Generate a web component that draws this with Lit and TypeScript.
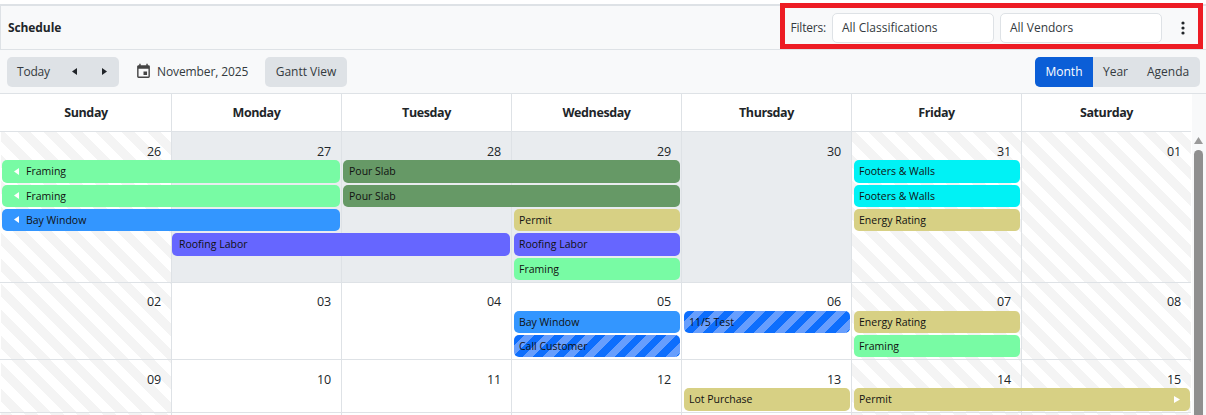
import { LitElement, html, css } from "lit";
import { customElement } from "lit/decorators.js";

type Ev = { t: string; r: number; a: number; b: number; c: string; ml?: string; left?: boolean; right?: boolean };
type Day = { n: string; k?: string };
type Week = { days: Day[]; events: Ev[]; cls: string };

const WEEKDAYS = ["Sunday", "Monday", "Tuesday", "Wednesday", "Thursday", "Friday", "Saturday"];

const d = (s: string, kinds: string): Day[] =>
  s.split(" ").map((n, i) => ({ n, k: kinds[i] === "s" ? "striped" : kinds[i] === "g" ? "past" : "" }));

const WEEKS: Week[] = [
  {
    cls: "w1",
    days: d("26 27 28 29 30 31 01", "sggggss"),
    events: [
      { t: "Framing", r: 2, a: 1, b: 3, c: "green", ml: "m1", left: true },
      { t: "Pour Slab", r: 2, a: 3, b: 5, c: "moss", ml: "m2" },
      { t: "Footers & Walls", r: 2, a: 6, b: 7, c: "cyan" },
      { t: "Framing", r: 3, a: 1, b: 3, c: "green", ml: "m1", left: true },
      { t: "Pour Slab", r: 3, a: 3, b: 5, c: "moss", ml: "m2" },
      { t: "Footers & Walls", r: 3, a: 6, b: 7, c: "cyan" },
      { t: "Bay Window", r: 4, a: 1, b: 3, c: "blue", ml: "m1", left: true },
      { t: "Permit", r: 4, a: 4, b: 5, c: "khaki" },
      { t: "Energy Rating", r: 4, a: 6, b: 7, c: "khaki" },
      { t: "Roofing Labor", r: 5, a: 2, b: 4, c: "indigo", ml: "m1" },
      { t: "Roofing Labor", r: 5, a: 4, b: 5, c: "indigo" },
      { t: "Framing", r: 6, a: 4, b: 5, c: "green" },
    ],
  },
  {
    cls: "w2",
    days: d("02 03 04 05 06 07 08", "s....ss"),
    events: [
      { t: "Bay Window", r: 2, a: 4, b: 5, c: "blue" },
      { t: "11/5 Test", r: 2, a: 5, b: 6, c: "hatch" },
      { t: "Energy Rating", r: 2, a: 6, b: 7, c: "khaki" },
      { t: "Call Customer", r: 3, a: 4, b: 5, c: "hatch" },
      { t: "Framing", r: 3, a: 6, b: 7, c: "green" },
    ],
  },
  {
    cls: "w3",
    days: d("09 10 11 12 13 14 15", "s....ss"),
    events: [
      { t: "Lot Purchase", r: 2, a: 5, b: 6, c: "khaki" },
      { t: "Permit", r: 2, a: 6, b: 8, c: "khaki", right: true },
    ],
  },
  { cls: "w4", days: d("16 17 18 19 20 21 22", "s....ss").map((x) => ({ ...x, n: "" })), events: [] },
];

@customElement("app-root")
export class AppRoot extends LitElement {
  static styles = css`
    :host {
      display: block;
      width: 1206px;
      height: 415px;
      overflow: hidden;
      position: relative;
      background: #fff;
      font-family: "Open Sans", "Noto Sans", sans-serif;
      font-size: 12px;
      color: #212529;
    }
    .top-gap { height: 4px; background: #fff; }
    .title-bar {
      display: flex;
      align-items: center;
      justify-content: space-between;
      height: 43px;
      background: #f8f9fa;
      border-top: 2px solid #dee2e6;
      border-left: 1px solid #dee2e6;
      border-bottom: 1px solid #dee2e6;
      padding: 0 16px 0 7px;
    }
    .title { font-weight: 700; font-size: 12px; letter-spacing: -0.1px; }
    .filters { display: flex; align-items: center; gap: 6px; }
    .filters-label { letter-spacing: -0.2px; color: #343a40; }
    .select {
      box-sizing: border-box;
      width: 162px;
      height: 30px;
      display: flex;
      align-items: center;
      padding-left: 9px;
      background: #fff;
      border: 1px solid #dee2e6;
      border-radius: 5px;
      color: #343a40;
    }
    .kebab { display: block; margin-left: 8px; width: 14px; height: 16px; }
    .toolbar {
      display: flex;
      align-items: center;
      justify-content: space-between;
      height: 43px;
      padding: 0 6px 0 7px;
      background: #f8f9fa;
      border-bottom: 1px solid #dee2e6;
      color: #343a40;
    }
    .tool-left { display: flex; align-items: center; }
    .btn-group {
      display: flex;
      align-items: center;
      height: 30px;
      background: #dee2e6;
      border-radius: 5px;
    }
    .today { width: 112px; }
    .today-label { margin-left: 10px; width: 55px; letter-spacing: -0.2px; }
    .nav { display: block; width: 5px; height: 7px; }
    .nav-next { margin-left: 25px; }
    .cal { display: block; width: 17px; height: 17px; margin-left: 16px; }
    .month-label { margin-left: 5px; width: 108px; letter-spacing: -0.1px; }
    .gantt { width: 82px; justify-content: center; }
    .views { overflow: hidden; }
    .view { height: 100%; display: flex; align-items: center; }
    .view.month { width: 58px; justify-content: center; background: #0b5ed7; color: #fff; }
    .view.year { width: 44px; padding-left: 10px; box-sizing: border-box; }
    .view.agenda { width: 63px; padding-left: 10px; box-sizing: border-box; }
    .body { display: flex; }
    .cal-area { width: 1192px; flex: none; }
    .head {
      display: grid;
      grid-template-columns: repeat(7, 170px);
      height: 37px;
      padding-left: 1px;
      border-bottom: 1px solid #dee2e6;
      background: #fff;
      width: 1190px;
    }
    .head-cell {
      display: flex;
      align-items: center;
      justify-content: center;
      font-weight: 700;
      font-size: 12.5px;
      letter-spacing: -0.4px;
      border-left: 1px solid #dee2e6;
    }
    .head-cell:first-child { border-left: 0; }
    .week {
      display: grid;
      grid-template-columns: repeat(7, 170px);
      row-gap: 2px;
      padding-left: 1px;
      width: 1190px;
      border-bottom: 1px solid #dee2e6;
    }
    .week.w1 { grid-template-rows: 26.4px repeat(5, 22.33px) 0; }
    .week.w2 { grid-template-rows: 26px repeat(2, 22px) 0; }
    .week.w3 { grid-template-rows: 27px 23px 0; row-gap: 1px; }
    .week.w4 { grid-template-rows: 40px; }
    .day {
      grid-row: 1 / -1;
      border-left: 1px solid #dee2e6;
      text-align: right;
      padding: 11px 10px 0 0;
      line-height: 15px;
      font-size: 12.5px;
      letter-spacing: -0.2px;
    }
    .w1 .day, .w3 .day { padding-top: 12px; }
    .day:first-child { border-left: 0; }
    .day.past { background: #e9ecef; }
    .day.striped {
      background: repeating-linear-gradient(
        45deg,
        #fff 0,
        #fff 7.5px,
        #f4f4f4 7.5px,
        #f4f4f4 16.7px,
        #fff 16.7px,
        #fff 18.4px
      );
    }
    .ev {
      z-index: 1;
      display: flex;
      align-items: center;
      margin: 0 1px 0 3px;
      padding-left: 5px;
      border-radius: 5px;
      font-size: 10.5px;
      color: #111;
      white-space: nowrap;
      overflow: hidden;
      min-width: 0;
    }
    .w1 .ev { padding-bottom: 0.67px; }
    .w3 .ev { padding-bottom: 1px; }
    .ev.m1 { margin-left: 1px; padding-left: 7px; }
    .ev.m2 { margin-left: 2px; padding-left: 6px; }
    .ev.green { background: #78fba4; }
    .ev.moss { background: #669966; }
    .ev.cyan { background: #00f2f5; }
    .ev.blue { background: #3396ff; }
    .ev.khaki { background: #d7d084; }
    .ev.indigo { background: #6666ff; }
    .ev.hatch {
      background: repeating-linear-gradient(135deg, #0d6efd, #0d6efd 7.2px, #679efd 7.2px, #679efd 14.4px);
    }
    .arrow-l { display: block; width: 5px; height: 7px; margin: 0 7px 0 5px; flex: none; }
    .ev-text { flex: 1; }
    .arrow-r { display: block; width: 6px; height: 7px; margin-right: 10px; flex: none; }
    .scrollbar {
      flex: none;
      width: 14px;
      background: #f8f9fa;
      display: flex;
      flex-direction: column;
      align-items: flex-start;
      padding-left: 2px;
      box-sizing: border-box;
    }
    .scroll-up { display: block; width: 9px; height: 7px; margin: 43px 0 6px; }
    .thumb { width: 9px; flex: 1; background: #8f8f8f; border-radius: 5px 5px 0 0; }
    .annot {
      position: absolute;
      left: 780px;
      top: 3px;
      width: 423px;
      height: 46px;
      box-sizing: border-box;
      border: 5px solid #ed1c24;
      pointer-events: none;
    }
  `;

  private event(e: Ev) {
    return html`<div
      class="ev ${e.c} ${e.ml ?? ""}"
      style="grid-row:${e.r};grid-column:${e.a} / ${e.b}"
    >
      ${e.left
        ? html`<svg class="arrow-l" viewBox="0 0 5 7"><polygon points="5,0 5,7 0,3.5" fill="#fff" /></svg>`
        : ""}
      <span class="ev-text">${e.t}</span>
      ${e.right
        ? html`<svg class="arrow-r" viewBox="0 0 6 7"><polygon points="0,0 0,7 6,3.5" fill="#fff" /></svg>`
        : ""}
    </div>`;
  }

  render() {
    return html`
      <div class="top-gap"></div>
      <div class="title-bar">
        <div class="title">Schedule</div>
        <div class="filters">
          <span class="filters-label">Filters:</span>
          <div class="select">All Classifications</div>
          <div class="select">All Vendors</div>
          <svg class="kebab" viewBox="0 0 14 16">
            <circle cx="7" cy="3" r="1.6" fill="#212529" />
            <circle cx="7" cy="8" r="1.6" fill="#212529" />
            <circle cx="7" cy="13" r="1.6" fill="#212529" />
          </svg>
        </div>
      </div>
      <div class="toolbar">
        <div class="tool-left">
          <div class="btn-group today">
            <span class="today-label">Today</span>
            <svg class="nav" viewBox="0 0 5 7"><polygon points="5,0 5,7 0,3.5" fill="#212529" /></svg>
            <svg class="nav nav-next" viewBox="0 0 5 7"><polygon points="0,0 0,7 5,3.5" fill="#212529" /></svg>
          </div>
          <svg class="cal" viewBox="0 0 24 24">
            <path
              fill="#444"
              d="M19 19H5V8h14m-3-7v2H8V1H6v2H5c-1.11 0-2 .89-2 2v14a2 2 0 0 0 2 2h14a2 2 0 0 0 2-2V5a2 2 0 0 0-2-2h-1V1m-1 11h-5v5h5v-5z"
            />
          </svg>
          <span class="month-label">November, 2025</span>
          <div class="btn-group gantt">Gantt View</div>
        </div>
        <div class="btn-group views">
          <div class="view month">Month</div>
          <div class="view year">Year</div>
          <div class="view agenda">Agenda</div>
        </div>
      </div>
      <div class="body">
        <div class="cal-area">
          <div class="head">${WEEKDAYS.map((w) => html`<div class="head-cell">${w}</div>`)}</div>
          ${WEEKS.map(
            (w) => html`<div class="week ${w.cls}">
              ${w.days.map(
                (x, i) => html`<div class="day ${x.k}" style="grid-column:${i + 1}">${x.n}</div>`
              )}
              ${w.events.map((e) => this.event(e))}
            </div>`
          )}
        </div>
        <div class="scrollbar">
          <svg class="scroll-up" viewBox="0 0 9 7"><polygon points="4.5,0 9,7 0,7" fill="#9a9a9a" /></svg>
          <div class="thumb"></div>
        </div>
      </div>
      <div class="annot"></div>
    `;
  }
}
